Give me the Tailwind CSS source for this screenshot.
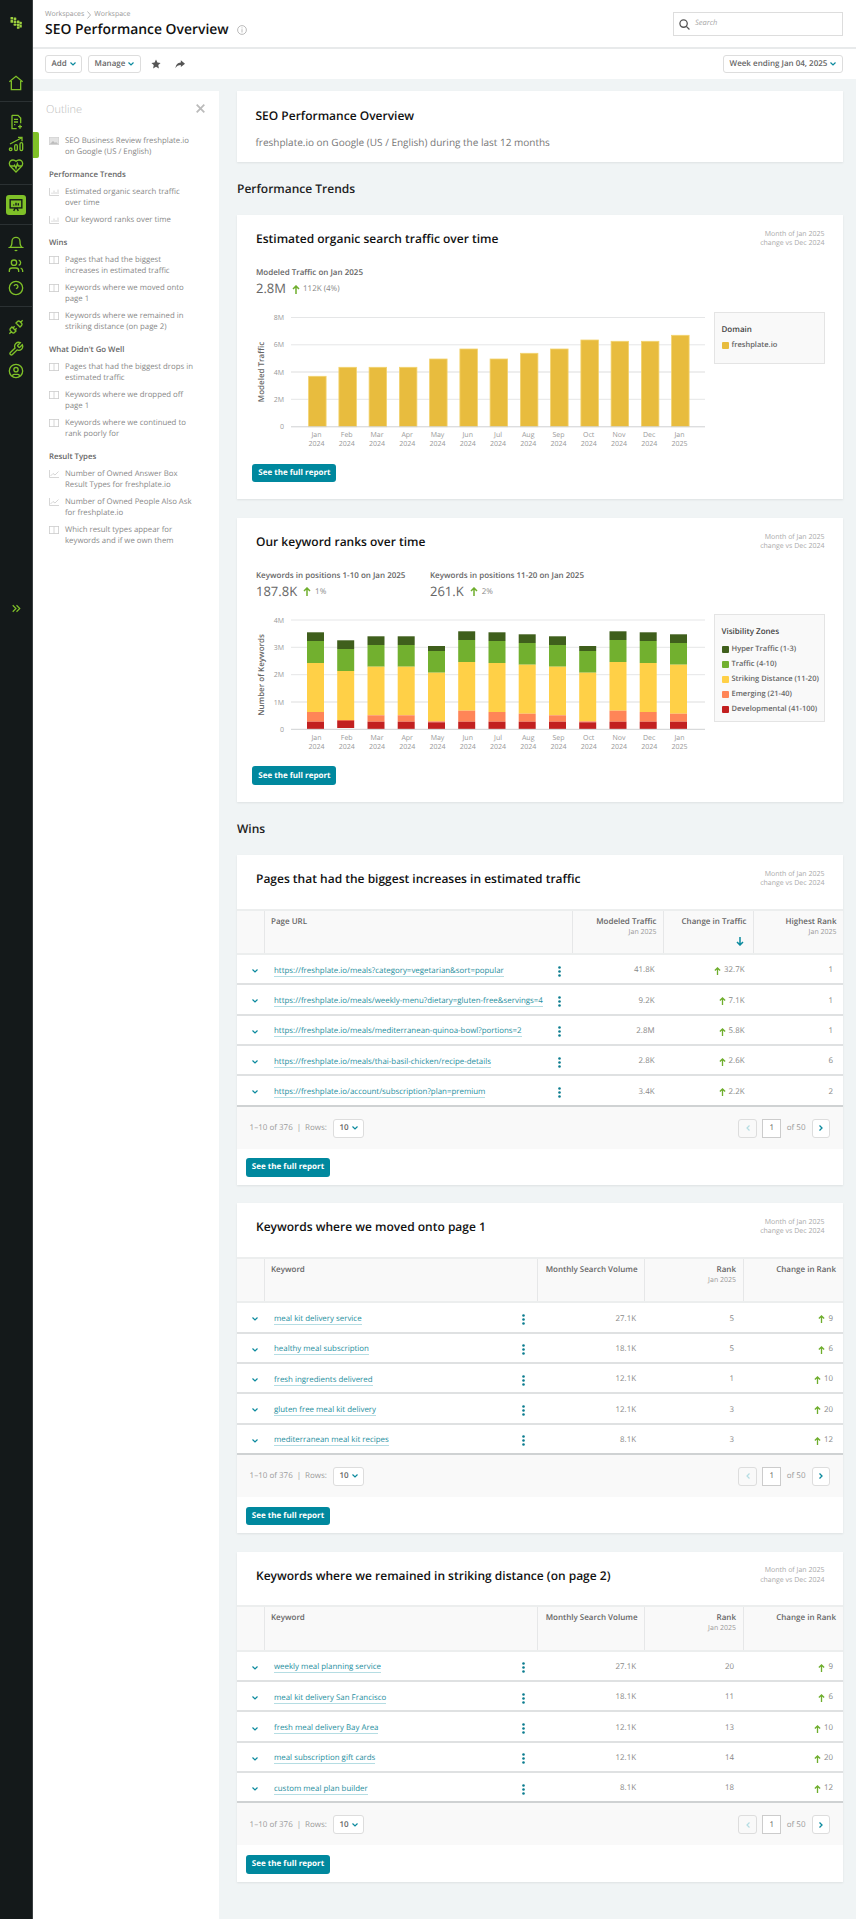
<!DOCTYPE html>
<html lang="en"><head><meta charset="utf-8"><title>SEO Performance Overview</title>
<script src="https://cdn.jsdelivr.net/npm/@tailwindcss/browser@4"></script></head>
<body class="font-['Open_Sans',sans-serif] [text-rendering:geometricPrecision] bg-[#f0f4f5] text-[#666]">
<div class="flex w-[856px] h-[1919px] overflow-hidden">
<!-- Sidebar -->
<aside class="w-[33px] shrink-0 bg-[#14191a] border-r border-[#3a3f40] flex flex-col text-[#7fc028]">
 <div class="h-[102px] border-b border-[#2b3133] flex flex-col items-center pt-[17px]">
  <svg class="w-[12px] h-[12px]" viewBox="0 0 12 12" fill="#9ccf3f"><rect x="0.500" y="0" width="2.600" height="2.600" rx="0.500"/><rect x="3.700" y="0.500" width="2.600" height="2.600" rx="0.500"/><rect x="0.500" y="3.100" width="2.600" height="2.600" rx="0.500"/><rect x="3.700" y="3.600" width="2.600" height="2.600" rx="0.500"/><rect x="6.900" y="3.600" width="2.600" height="2.600" rx="0.500"/><rect x="3.700" y="6.700" width="2.600" height="2" rx="0.500"/><rect x="6.900" y="6.700" width="2.600" height="2.600" rx="0.500"/><rect x="9.500" y="4.800" width="2.300" height="2.600" rx="0.500"/><rect x="6.900" y="9.400" width="2.600" height="2.400" rx="0.500"/><rect x="9.500" y="8" width="2.300" height="2.600" rx="0.500"/></svg>
  <svg class="w-[16px] h-[16px] mt-[46px]" viewBox="0 0 24 24" fill="none" stroke="currentColor" stroke-width="2"><path d="M2 10 12 2l10 8M5 9v13h14V9"/></svg>
 </div>
 <div class="h-[83px] border-b border-[#2b3133] flex flex-col items-center pt-[12px] gap-[6px]">
  <svg class="w-[16px] h-[16px]" viewBox="0 0 24 24" fill="none" stroke="currentColor" stroke-width="2"><path d="M6 2h9l4 4v8M6 2v20h7M9 8h6M9 12h6M9 16h2M18 16v6M15 19h6"/></svg>
  <svg class="w-[16px] h-[16px]" viewBox="0 0 24 24" fill="none" stroke="currentColor" stroke-width="2"><path d="M3 12 20 3M15 2h6v6"/><rect x="2" y="18" width="4" height="4" rx="2"/><rect x="10" y="13" width="4" height="9" rx="2"/><rect x="18" y="10" width="4" height="12" rx="2"/></svg>
  <svg class="w-[16px] h-[16px]" viewBox="0 0 24 24" fill="none" stroke="currentColor" stroke-width="2"><path d="M19 14c1.49-1.46 3-3.21 3-5.5A5.5 5.5 0 0 0 16.5 3c-1.76 0-3 .5-4.5 2-1.5-1.5-2.74-2-4.5-2A5.5 5.5 0 0 0 2 8.5c0 2.3 1.5 4.05 3 5.5l7 7Z"/><path d="M3.22 12H9.5l.5-1 2 4.5 2-7 1.5 3.5h5.27"/></svg>
 </div>
 <div class="h-[39.5px] border-b border-[#2b3133] flex justify-center pt-[9.5px]">
  <div class="w-[20.5px] h-[20.5px] rounded-[3px] bg-[#7fc028] flex items-center justify-center">
   <svg class="w-[14px] h-[14px]" viewBox="0 0 24 24" fill="none" stroke="#14191a" stroke-width="2.4"><rect x="2" y="3" width="20" height="14"/><path d="M8 22l3-5M16 22l-3-5M8 13v-2M12 13V8M16 13v-4"/></svg>
  </div>
 </div>
 <div class="h-[82.5px] border-b border-[#2b3133] flex flex-col items-center pt-[11.5px] gap-[6px]">
  <svg class="w-[16px] h-[16px]" viewBox="0 0 24 24" fill="none" stroke="currentColor" stroke-width="2"><path d="M6 8a6 6 0 0 1 12 0c0 7 3 9 3 9H3s3-2 3-9"/><path d="M10.3 21a1.94 1.94 0 0 0 3.4 0"/></svg>
  <svg class="w-[16px] h-[16px]" viewBox="0 0 24 24" fill="none" stroke="currentColor" stroke-width="2"><path d="M16 21v-2a4 4 0 0 0-4-4H6a4 4 0 0 0-4 4v2"/><circle cx="9" cy="7" r="4"/><path d="M22 21v-2a4 4 0 0 0-3-3.87M16 3.13a4 4 0 0 1 0 7.75"/></svg>
  <svg class="w-[16px] h-[16px]" viewBox="0 0 24 24" fill="none" stroke="currentColor" stroke-width="2"><circle cx="12" cy="12" r="10"/><path d="M9.09 9a3 3 0 0 1 5.83 1c0 2-3 3-3 3M12 17h.01"/></svg>
 </div>
 <div class="flex flex-col items-center pt-[12px] gap-[6px]">
  <svg class="w-[16px] h-[16px]" viewBox="0 0 24 24" fill="none" stroke="currentColor" stroke-width="2"><path d="m19 5 3-3M2 22l3-3M6.3 20.3a2.4 2.4 0 0 0 3.4 0L12 18l-6-6-2.3 2.3a2.4 2.4 0 0 0 0 3.4ZM7.5 13.5 10 11M10.5 16.5 13 14M12 6l6 6 2.3-2.3a2.4 2.4 0 0 0 0-3.4l-2.6-2.6a2.4 2.4 0 0 0-3.4 0Z"/></svg>
  <svg class="w-[16px] h-[16px]" viewBox="0 0 24 24" fill="none" stroke="currentColor" stroke-width="2"><path d="M14.7 6.3a1 1 0 0 0 0 1.4l1.6 1.6a1 1 0 0 0 1.4 0l3.77-3.77a6 6 0 0 1-7.94 7.94l-6.91 6.91a2.12 2.12 0 0 1-3-3l6.91-6.91a6 6 0 0 1 7.94-7.94l-3.76 3.76z"/></svg>
  <svg class="w-[16px] h-[16px]" viewBox="0 0 24 24" fill="none" stroke="currentColor" stroke-width="2"><circle cx="12" cy="12" r="10"/><circle cx="12" cy="10" r="3.2"/><path d="M7 20.662V19a2 2 0 0 1 2-2h6a2 2 0 0 1 2 2v1.662"/></svg>
  <svg class="w-[13px] h-[13px] mt-[217px]" viewBox="0 0 24 24" fill="none" stroke="currentColor" stroke-width="2.200"><path d="m5 18 6-6-6-6M12 18l6-6-6-6"/></svg>
 </div>
</aside>
<div class="flex-1 flex flex-col min-w-0">
 <!-- Header -->
 <header class="h-[49px] bg-white border-b-2 border-[#e8eaeb] flex items-start justify-between pl-[12px] pr-[13px] shrink-0">
  <div class="pt-[10px]">
   <div class="flex items-center gap-[3px] h-[10px] text-[7px] leading-[10px] text-[#999]">Workspaces <svg class="w-[4px] h-[8px]" viewBox="0 0 4 8" fill="none" stroke="#999" stroke-width="0.7"><path d="m.5.5 3 3.500-3 3.500"/></svg> Workspace</div>
   <div class="flex items-center mt-[1px]"><h1 class="text-[13.900px] leading-[18px] font-semibold text-[#111]">SEO Performance Overview</h1>
    <svg class="w-[10px] h-[10px] ml-[8px]" viewBox="0 0 10 10" fill="none" stroke="#aaa" stroke-width="0.8"><circle cx="5" cy="5" r="4.4"/><path d="M5 4.2V7.5M5 2.4v1"/></svg></div>
  </div>
  <div class="mt-[12px] w-[170px] h-[24px] border border-[#ddd] flex items-center pl-[5px] gap-[5px]">
   <svg class="w-[11px] h-[11px]" viewBox="0 0 12 12" fill="none" stroke="#555" stroke-width="1.4"><circle cx="5" cy="5" r="4"/><path d="m8 8 3.4 3.4"/></svg>
   <span class="italic text-[7.5px] text-[#aaa]">Search</span>
  </div>
 </header>
 <!-- Toolbar -->
 <div class="h-[30px] bg-white flex items-center pl-[12px] pr-[13px] shrink-0">
  <div class="h-[18.5px] w-[37px] border border-[#ddd] rounded-[3px] flex items-center justify-center gap-[3px] text-[8px] font-semibold text-[#666]">Add <svg class="w-[6px] h-[4px]" viewBox="0 0 6 4" fill="none" stroke="#0b8a9e" stroke-width="1.2"><path d="m.5.5 2.500 2.500 2.500-2.500"/></svg></div>
  <div class="h-[18.5px] w-[53px] ml-[6px] border border-[#ddd] rounded-[3px] flex items-center justify-center gap-[3px] text-[8px] font-semibold text-[#666]">Manage <svg class="w-[6px] h-[4px]" viewBox="0 0 6 4" fill="none" stroke="#0b8a9e" stroke-width="1.2"><path d="m.5.5 2.500 2.500 2.500-2.500"/></svg></div>
  <svg class="w-[10px] h-[10px] ml-[10px]" viewBox="0 0 24 24" fill="#555"><path d="m12 1 3.4 7.300 7.600 1-5.600 5.300 1.500 8L12 18.700 5.100 22.600l1.500-8L1 9.300l7.600-1z"/></svg>
  <svg class="w-[10px] h-[9px] ml-[14px]" viewBox="0 0 12 10" fill="#555"><path d="M7 0l5 4-5 4V5.500C4 5.500 2 6.500 0.500 9.500 1 5.500 3 2.700 7 2.500z"/></svg>
  <div class="ml-auto h-[18.5px] w-[120px] border border-[#ddd] rounded-[3px] flex items-center justify-center gap-[3px] text-[8px] font-semibold text-[#666]">Week ending Jan 04, 2025 <svg class="w-[6px] h-[4px]" viewBox="0 0 6 4" fill="none" stroke="#0b8a9e" stroke-width="1.2"><path d="m.5.5 2.500 2.500 2.500-2.500"/></svg></div>
 </div>
 <div class="flex flex-1 pt-[12px] min-h-0">
  <!-- Outline -->
  <nav class="relative w-[186px] shrink-0 bg-white pl-[16px] pr-[22px] text-[7.800px] leading-[11px] text-[#888]">
   <div class="absolute left-0 top-[41px] w-[5.500px] h-[26px] bg-[#7fc028] rounded-r-[2px]"></div>
   <div class="h-[44.500px] pt-[11px] -mr-[10px] flex items-start justify-between">
    <span class="-ml-[3px] text-[11px] leading-[16px] font-light text-[#bbb]">Outline</span>
    <svg class="w-[9px] h-[9px] mt-[2px] mr-[2px]" viewBox="0 0 9 9" fill="none" stroke="#bbb" stroke-width="1.800"><path d="m.7.7 7.600 7.600M8.300.7.700 8.300"/></svg>
   </div>
   <div class="flex flex-col gap-[6px]">
    <div class="flex gap-[6px]"><svg class="w-[10px] h-[8px] mt-[1px] shrink-0" viewBox="0 0 10 8" fill="#e3e3e3" stroke="#ccc" stroke-width="0.6"><rect x="0.300" y="0.300" width="9.400" height="7.400"/><path d="m1 7 3-3 2 2 1-1 2 2z" fill="#bbb"/></svg><span>SEO Business Review freshplate.io on Google (US / English)</span></div>
    <div class="font-semibold text-[#666] mt-[6px]">Performance Trends</div>
    <div class="flex gap-[6px]"><svg class="w-[10px] h-[8px] mt-[1px] shrink-0" viewBox="0 0 10 8" fill="none" stroke="#ccc" stroke-width="0.8"><path d="M.5 0v7.500H10M3 6V4.500M5 6V2.500M7 6V4M9 6V1.500"/></svg><span>Estimated organic search traffic over time</span></div>
    <div class="flex gap-[6px]"><svg class="w-[10px] h-[8px] mt-[1px] shrink-0" viewBox="0 0 10 8" fill="none" stroke="#ccc" stroke-width="0.8"><path d="M.5 0v7.500H10M3 6V4.500M5 6V2.500M7 6V4M9 6V1.500"/></svg><span>Our keyword ranks over time</span></div>
    <div class="font-semibold text-[#666] mt-[6px]">Wins</div>
    <div class="flex gap-[6px]"><svg class="w-[10px] h-[8px] mt-[1px] shrink-0" viewBox="0 0 10 8" fill="none" stroke="#ccc" stroke-width="0.8"><rect x="0.400" y="0.400" width="9.200" height="7.200"/><path d="M5 .4v7.200"/></svg><span>Pages that had the biggest increases in estimated traffic</span></div>
    <div class="flex gap-[6px]"><svg class="w-[10px] h-[8px] mt-[1px] shrink-0" viewBox="0 0 10 8" fill="none" stroke="#ccc" stroke-width="0.8"><rect x="0.400" y="0.400" width="9.200" height="7.200"/><path d="M5 .4v7.200"/></svg><span>Keywords where we moved onto page 1</span></div>
    <div class="flex gap-[6px]"><svg class="w-[10px] h-[8px] mt-[1px] shrink-0" viewBox="0 0 10 8" fill="none" stroke="#ccc" stroke-width="0.8"><rect x="0.400" y="0.400" width="9.200" height="7.200"/><path d="M5 .4v7.200"/></svg><span>Keywords where we remained in striking distance (on page 2)</span></div>
    <div class="font-semibold text-[#666] mt-[6px]">What Didn't Go Well</div>
    <div class="flex gap-[6px]"><svg class="w-[10px] h-[8px] mt-[1px] shrink-0" viewBox="0 0 10 8" fill="none" stroke="#ccc" stroke-width="0.8"><rect x="0.400" y="0.400" width="9.200" height="7.200"/><path d="M5 .4v7.200"/></svg><span>Pages that had the biggest drops in estimated traffic</span></div>
    <div class="flex gap-[6px]"><svg class="w-[10px] h-[8px] mt-[1px] shrink-0" viewBox="0 0 10 8" fill="none" stroke="#ccc" stroke-width="0.8"><rect x="0.400" y="0.400" width="9.200" height="7.200"/><path d="M5 .4v7.200"/></svg><span>Keywords where we dropped off page 1</span></div>
    <div class="flex gap-[6px]"><svg class="w-[10px] h-[8px] mt-[1px] shrink-0" viewBox="0 0 10 8" fill="none" stroke="#ccc" stroke-width="0.8"><rect x="0.400" y="0.400" width="9.200" height="7.200"/><path d="M5 .4v7.200"/></svg><span>Keywords where we continued to rank poorly for</span></div>
    <div class="font-semibold text-[#666] mt-[6px]">Result Types</div>
    <div class="flex gap-[6px]"><svg class="w-[10px] h-[8px] mt-[1px] shrink-0" viewBox="0 0 10 8" fill="none" stroke="#ccc" stroke-width="0.8"><path d="M.5 0v7.500H10M1.500 6l2.500-2.500 2 1.500 3.500-3.500"/></svg><span>Number of Owned Answer Box Result Types for freshplate.io</span></div>
    <div class="flex gap-[6px]"><svg class="w-[10px] h-[8px] mt-[1px] shrink-0" viewBox="0 0 10 8" fill="none" stroke="#ccc" stroke-width="0.8"><path d="M.5 0v7.500H10M1.500 6l2.500-2.500 2 1.500 3.500-3.500"/></svg><span>Number of Owned People Also Ask for freshplate.io</span></div>
    <div class="flex gap-[6px]"><svg class="w-[10px] h-[8px] mt-[1px] shrink-0" viewBox="0 0 10 8" fill="none" stroke="#ccc" stroke-width="0.8"><rect x="0.400" y="0.400" width="9.200" height="7.200"/><path d="M5 .4v7.200"/></svg><span>Which result types appear for keywords and if we own them</span></div>
   </div>
  </nav>
  <!-- Main -->
  <main class="w-[606px] ml-[18px] shrink-0">
   <section class="h-[71px] bg-white shadow-[0_1px_2px_rgba(0,0,0,0.08)] pl-[18.500px] pt-[16px]">
    <h2 class="text-[12px] leading-[18px] font-semibold text-[#111]">SEO Performance Overview</h2>
    <p class="mt-[10px] text-[10px] leading-[14px] font-medium text-[#777]">freshplate.io on Google (US / English) during the last 12 months</p>
   </section>
   <h2 class="h-[53px] pt-[1px] flex items-center text-[12px] font-semibold text-[#222]">Performance Trends</h2>

   <section class="h-[284px] bg-white shadow-[0_1px_2px_rgba(0,0,0,0.08)]">
    <div class="h-[48px] flex justify-between pl-[19px] pr-[18.600px] pt-[15px]">
     <h3 class="text-[12px] leading-[18px] font-semibold text-[#111]">Estimated organic search traffic over time</h3>
     <div class="text-right text-[7px] leading-[9.300px] text-[#aaa] -mt-[0.500px]">Month of Jan 2025<br>change vs Dec 2024</div>
    </div>
    <div class="h-[42px] pl-[19px]">
     <div class="text-[8px] leading-[11px] pt-[4px] h-[15px] font-semibold text-[#666]">Modeled Traffic on Jan 2025</div>
     <div class="flex items-center h-[18px] mt-[2px]"><span class="text-[13px] text-[#666]">2.8M</span>
      <svg class="w-[8px] h-[9px] ml-[6px]" viewBox="0 0 8 9" fill="none" stroke="#6fae2d" stroke-width="1.500"><path d="M4 9V1M1 4l3-3 3 3"/></svg><span class="ml-[3px] text-[8px] text-[#888]">112K (4%)</span></div>
    </div>
    <div class="h-[150px] flex">
     <svg class="w-[477px] h-[150px] shrink-0" viewBox="237 305 477 150" font-size="7" fill="#999">
      <g stroke="#e5e6e7" stroke-width="1"><path d="M291 317.500H705M291 344.800H705M291 399.300H705"/><path d="M291 372H705" stroke="#eeeeee" stroke-width="2"/></g>
      <g fill="#e8bc3e" stroke="#f3d36f" stroke-width="0.800">
       <rect x="308.600" y="376.300" width="17.500" height="50.400"/><rect x="338.900" y="367.300" width="17.500" height="59.400"/><rect x="369.100" y="367.300" width="17.500" height="59.400"/><rect x="399.400" y="367.300" width="17.500" height="59.400"/><rect x="429.600" y="359" width="17.500" height="67.700"/><rect x="459.900" y="349" width="17.500" height="77.700"/><rect x="490.100" y="359" width="17.500" height="67.700"/><rect x="520.400" y="353.300" width="17.500" height="73.400"/><rect x="550.600" y="349" width="17.500" height="77.700"/><rect x="580.900" y="340" width="17.500" height="86.700"/><rect x="611.100" y="341.300" width="17.500" height="85.400"/><rect x="641.400" y="341.300" width="17.500" height="85.400"/><rect x="671.600" y="335.300" width="17.500" height="91.400"/>
      </g>
      <path d="M291 426.800H705" stroke="#cfd1d2" stroke-width="1"/>
      <g text-anchor="end"><text x="284" y="320">8M</text><text x="284" y="347.300">6M</text><text x="284" y="374.600">4M</text><text x="284" y="402">2M</text><text x="284" y="429.300">0</text></g>
      <text transform="translate(264 372) rotate(-90)" text-anchor="middle" font-size="8" font-weight="600" fill="#666">Modeled Traffic</text>
      <g text-anchor="middle">
       <text x="316.500" y="437.200">Jan</text><text x="316.500" y="446.200">2024</text><text x="346.700" y="437.200">Feb</text><text x="346.700" y="446.200">2024</text><text x="377" y="437.200">Mar</text><text x="377" y="446.200">2024</text><text x="407.200" y="437.200">Apr</text><text x="407.200" y="446.200">2024</text><text x="437.500" y="437.200">May</text><text x="437.500" y="446.200">2024</text><text x="467.700" y="437.200">Jun</text><text x="467.700" y="446.200">2024</text><text x="498" y="437.200">Jul</text><text x="498" y="446.200">2024</text><text x="528.200" y="437.200">Aug</text><text x="528.200" y="446.200">2024</text><text x="558.500" y="437.200">Sep</text><text x="558.500" y="446.200">2024</text><text x="588.700" y="437.200">Oct</text><text x="588.700" y="446.200">2024</text><text x="619" y="437.200">Nov</text><text x="619" y="446.200">2024</text><text x="649.200" y="437.200">Dec</text><text x="649.200" y="446.200">2024</text><text x="679.500" y="437.200">Jan</text><text x="679.500" y="446.200">2025</text>
      </g>
     </svg>
     <div class="mt-[6.700px] w-[111px] h-[52px] bg-[#f9f9f9] border border-[#e4e4e4] pl-[6.500px] pt-[11px]">
      <div class="text-[8px] leading-[11px] font-semibold text-[#444]">Domain</div>
      <div class="flex items-center gap-[3px] mt-[5px] text-[7.500px] leading-[11px] font-semibold text-[#666]"><span class="w-[7px] h-[7px] rounded-[1px] bg-[#e8bc3e]"></span>freshplate.io</div>
     </div>
    </div>
    <a class="ml-[15.400px] mt-[8.700px] w-[84px] h-[18.500px] rounded-[3px] bg-[#00889e] flex items-center justify-center text-[8px] font-bold text-white">See the full report</a>
   </section>

   <section class="h-[284px] mt-[19px] bg-white shadow-[0_1px_2px_rgba(0,0,0,0.08)]">
    <div class="h-[48px] flex justify-between pl-[19px] pr-[18.600px] pt-[15px]">
     <h3 class="text-[12px] leading-[18px] font-semibold text-[#111]">Our keyword ranks over time</h3>
     <div class="text-right text-[7px] leading-[9.300px] text-[#aaa] -mt-[0.500px]">Month of Jan 2025<br>change vs Dec 2024</div>
    </div>
    <div class="h-[42px] pl-[19px] flex">
     <div class="w-[174px]">
      <div class="text-[8px] leading-[11px] pt-[3.500px] h-[14.500px] font-semibold text-[#666]">Keywords in positions 1-10 on Jan 2025</div>
      <div class="flex items-center h-[18px] mt-[2px]"><span class="text-[13px] text-[#666]">187.8K</span><svg class="w-[8px] h-[9px] ml-[6px]" viewBox="0 0 8 9" fill="none" stroke="#6fae2d" stroke-width="1.500"><path d="M4 9V1M1 4l3-3 3 3"/></svg><span class="ml-[4px] text-[8px] text-[#888]">1%</span></div>
     </div>
     <div>
      <div class="text-[8px] leading-[11px] pt-[3.500px] h-[14.500px] font-semibold text-[#666]">Keywords in positions 11-20 on Jan 2025</div>
      <div class="flex items-center h-[18px] mt-[2px]"><span class="text-[13px] text-[#666]">261.K</span><svg class="w-[8px] h-[9px] ml-[6px]" viewBox="0 0 8 9" fill="none" stroke="#6fae2d" stroke-width="1.500"><path d="M4 9V1M1 4l3-3 3 3"/></svg><span class="ml-[4px] text-[8px] text-[#888]">2%</span></div>
     </div>
    </div>
    <div class="h-[150px] flex">
     <svg class="w-[477px] h-[150px] shrink-0" viewBox="237 608 477 150" font-size="7" fill="#999">
      <g stroke="#e5e6e7" stroke-width="1"><path d="M291 620H705M291 647.300H705M291 674.700H705"/><path d="M291 702H705" stroke="#eeeeee" stroke-width="2"/></g>
      <g fill="#3f5f1c"><rect x="307" y="632.300" width="17" height="8.700"/><rect x="337.200" y="640.300" width="17" height="8.700"/><rect x="367.500" y="636.300" width="17" height="8.700"/><rect x="397.700" y="636.300" width="17" height="8.700"/><rect x="428" y="646" width="17" height="5"/><rect x="458.200" y="631.300" width="17" height="8.700"/><rect x="488.500" y="632.300" width="17" height="8.700"/><rect x="518.700" y="634.300" width="17" height="8.700"/><rect x="549" y="636.300" width="17" height="8.700"/><rect x="579.200" y="646" width="17" height="5"/><rect x="609.500" y="631.300" width="17" height="8.700"/><rect x="639.700" y="632.300" width="17" height="8.700"/><rect x="670" y="634.300" width="17" height="8.700"/></g>
      <g fill="#72b02f"><rect x="307" y="641" width="17" height="22"/><rect x="337.200" y="649" width="17" height="22"/><rect x="367.500" y="645" width="17" height="21.700"/><rect x="397.700" y="645" width="17" height="21.700"/><rect x="428" y="651" width="17" height="21.700"/><rect x="458.200" y="640" width="17" height="22"/><rect x="488.500" y="641" width="17" height="22"/><rect x="518.700" y="643" width="17" height="21.700"/><rect x="549" y="645" width="17" height="21.700"/><rect x="579.200" y="651" width="17" height="21.700"/><rect x="609.500" y="640" width="17" height="22"/><rect x="639.700" y="641" width="17" height="22"/><rect x="670" y="643" width="17" height="21.700"/></g>
      <g fill="#ffd047"><rect x="307" y="663" width="17" height="49"/><rect x="337.200" y="671" width="17" height="49"/><rect x="367.500" y="666.700" width="17" height="48.600"/><rect x="397.700" y="666.700" width="17" height="48.600"/><rect x="428" y="672.700" width="17" height="48.600"/><rect x="458.200" y="662" width="17" height="48.700"/><rect x="488.500" y="663" width="17" height="49"/><rect x="518.700" y="664.700" width="17" height="49"/><rect x="549" y="666.700" width="17" height="48.600"/><rect x="579.200" y="672.700" width="17" height="48.600"/><rect x="609.500" y="662" width="17" height="48.700"/><rect x="639.700" y="663" width="17" height="49"/><rect x="670" y="664.700" width="17" height="49"/></g>
      <g fill="#ff8557"><rect x="307" y="712" width="17" height="9.700"/><rect x="337.200" y="720" width="17" height="1"/><rect x="367.500" y="715.300" width="17" height="6.400"/><rect x="397.700" y="715.300" width="17" height="6.400"/><rect x="428" y="721.300" width="17" height="1"/><rect x="458.200" y="710.700" width="17" height="11"/><rect x="488.500" y="712" width="17" height="9.700"/><rect x="518.700" y="713.700" width="17" height="8"/><rect x="549" y="715.300" width="17" height="6.400"/><rect x="579.200" y="721.300" width="17" height="1"/><rect x="609.500" y="710.700" width="17" height="11"/><rect x="639.700" y="712" width="17" height="9.700"/><rect x="670" y="713.700" width="17" height="8"/></g>
      <g fill="#c22020"><rect x="307" y="721.700" width="17" height="7.300"/><rect x="337.200" y="720.700" width="17" height="7.300"/><rect x="367.500" y="721.700" width="17" height="7.300"/><rect x="397.700" y="721.700" width="17" height="7.300"/><rect x="428" y="722.300" width="17" height="6.700"/><rect x="458.200" y="721.700" width="17" height="7.300"/><rect x="488.500" y="721.700" width="17" height="7.300"/><rect x="518.700" y="721.700" width="17" height="7.300"/><rect x="549" y="721.700" width="17" height="7.300"/><rect x="579.200" y="722.300" width="17" height="6.700"/><rect x="609.500" y="721.700" width="17" height="7.300"/><rect x="639.700" y="721.700" width="17" height="7.300"/><rect x="670" y="721.700" width="17" height="7.300"/></g>
      <path d="M291 729.300H705" stroke="#cfd1d2" stroke-width="1"/>
      <g text-anchor="end"><text x="284" y="622.600">4M</text><text x="284" y="650">3M</text><text x="284" y="677.300">2M</text><text x="284" y="704.600">1M</text><text x="284" y="731.900">0</text></g>
      <text transform="translate(264 675) rotate(-90)" text-anchor="middle" font-size="8" font-weight="600" fill="#666">Number of Keywords</text>
      <g text-anchor="middle">
       <text x="316.500" y="739.800">Jan</text><text x="316.500" y="748.800">2024</text><text x="346.700" y="739.800">Feb</text><text x="346.700" y="748.800">2024</text><text x="377" y="739.800">Mar</text><text x="377" y="748.800">2024</text><text x="407.200" y="739.800">Apr</text><text x="407.200" y="748.800">2024</text><text x="437.500" y="739.800">May</text><text x="437.500" y="748.800">2024</text><text x="467.700" y="739.800">Jun</text><text x="467.700" y="748.800">2024</text><text x="498" y="739.800">Jul</text><text x="498" y="748.800">2024</text><text x="528.200" y="739.800">Aug</text><text x="528.200" y="748.800">2024</text><text x="558.500" y="739.800">Sep</text><text x="558.500" y="748.800">2024</text><text x="588.700" y="739.800">Oct</text><text x="588.700" y="748.800">2024</text><text x="619" y="739.800">Nov</text><text x="619" y="748.800">2024</text><text x="649.200" y="739.800">Dec</text><text x="649.200" y="748.800">2024</text><text x="679.500" y="739.800">Jan</text><text x="679.500" y="748.800">2025</text>
      </g>
     </svg>
     <div class="mt-[6.300px] w-[111px] h-[107.700px] bg-[#f9f9f9] border border-[#e4e4e4] pl-[6.500px] pt-[11px]">
      <div class="text-[8px] leading-[11px] font-semibold text-[#444] mb-[4.500px]">Visibility Zones</div>
      <div class="flex items-center gap-[3px] h-[15.150px] text-[7.500px] font-semibold text-[#666]"><span class="w-[7px] h-[7px] rounded-[1px] bg-[#3f5f1c]"></span>Hyper Traffic (1-3)</div>
      <div class="flex items-center gap-[3px] h-[15.150px] text-[7.500px] font-semibold text-[#666]"><span class="w-[7px] h-[7px] rounded-[1px] bg-[#72b02f]"></span>Traffic (4-10)</div>
      <div class="flex items-center gap-[3px] h-[15.150px] text-[7.500px] font-semibold text-[#666]"><span class="w-[7px] h-[7px] rounded-[1px] bg-[#ffd047]"></span>Striking Distance (11-20)</div>
      <div class="flex items-center gap-[3px] h-[15.150px] text-[7.500px] font-semibold text-[#666]"><span class="w-[7px] h-[7px] rounded-[1px] bg-[#ff8557]"></span>Emerging (21-40)</div>
      <div class="flex items-center gap-[3px] h-[15.150px] text-[7.500px] font-semibold text-[#666]"><span class="w-[7px] h-[7px] rounded-[1px] bg-[#c22020]"></span>Developmental (41-100)</div>
     </div>
    </div>
    <a class="ml-[15.400px] mt-[8.300px] w-[84px] h-[18.500px] rounded-[3px] bg-[#00889e] flex items-center justify-center text-[8px] font-bold text-white">See the full report</a>
   </section>

   <h2 class="h-[53px] pt-[1px] flex items-center text-[12px] font-semibold text-[#222]">Wins</h2>

   <!-- Table card 1 -->
   <section class="h-[330px] bg-white shadow-[0_1px_2px_rgba(0,0,0,0.08)]">
    <div class="h-[53.700px] flex justify-between pl-[19px] pr-[18.600px] pt-[15px]">
     <h3 class="text-[12px] leading-[18px] font-semibold text-[#111]">Pages that had the biggest increases in estimated traffic</h3>
     <div class="text-right text-[7px] leading-[9.300px] text-[#aaa] -mt-[0.500px]">Month of Jan 2025<br>change vs Dec 2024</div>
    </div>
    <div class="grid grid-cols-[28px_308px_91px_90px_89px] h-[46.300px] bg-[#f9f9f9] border-t-2 border-b-2 border-[#eceeee] text-[8px] leading-[11px] font-semibold text-[#666]">
     <div class="border-r border-[#e6e7e8]"></div>
     <div class="border-r border-[#e6e7e8] pl-[6px] pt-[5px]">Page URL</div>
     <div class="border-r border-[#e6e7e8] pr-[6.500px] pt-[5px] text-right">Modeled Traffic<div class="text-[7px] font-normal text-[#999] leading-[9px] mt-[1px]">Jan 2025</div></div>
     <div class="border-r border-[#e6e7e8] pr-[6.500px] pt-[5px] text-right flex flex-col items-end">Change in Traffic<svg class="w-[8px] h-[9px] mt-[10px] mr-[3px]" viewBox="0 0 8 9" fill="none" stroke="#0b8a9e" stroke-width="1.500"><path d="M4 0v8M1 5l3 3 3-3"/></svg></div>
     <div class="pr-[6.500px] pt-[5px] text-right">Highest Rank<div class="text-[7px] font-normal text-[#999] leading-[9px] mt-[1px]">Jan 2025</div></div>
    </div>
    <div class="grid grid-cols-[28px_308px_91px_90px_89px] items-center h-[30.340px] pt-[4px] border-b-2 border-[#dfe1e2] text-[7.900px] text-[#888]">
     <svg class="w-[6px] h-[4px] ml-[15px]" viewBox="0 0 6 4" fill="none" stroke="#0b8a9e" stroke-width="1.200"><path d="m.5.5 2.500 2.500 2.500-2.500"/></svg>
     <div class="flex items-center justify-between pl-[9px] pr-[12.500px]"><a class="text-[#1f8fa0] border-b border-[#b5dde3] leading-[10px]">https://freshplate.io/meals?category=vegetarian&amp;sort=popular</a><svg class="w-[3px] h-[11px]" viewBox="0 0 3 11" fill="#0b7c8f"><circle cx="1.500" cy="1.500" r="1.300"/><circle cx="1.500" cy="5.500" r="1.300"/><circle cx="1.500" cy="9.500" r="1.300"/></svg></div>
     <div class="text-right pr-[9.500px]">41.8K</div>
     <div class="flex items-center justify-end gap-[3px] pr-[9.500px]"><svg class="w-[7px] h-[8px]" viewBox="0 0 8 9" fill="none" stroke="#6fae2d" stroke-width="1.500"><path d="M4 9V1M1 4l3-3 3 3"/></svg>32.7K</div>
     <div class="text-right pr-[10px]">1</div>
    </div>
    <div class="grid grid-cols-[28px_308px_91px_90px_89px] items-center h-[30.340px] pt-[4px] border-b-2 border-[#dfe1e2] text-[7.900px] text-[#888]">
     <svg class="w-[6px] h-[4px] ml-[15px]" viewBox="0 0 6 4" fill="none" stroke="#0b8a9e" stroke-width="1.200"><path d="m.5.5 2.500 2.500 2.500-2.500"/></svg>
     <div class="flex items-center justify-between pl-[9px] pr-[12.500px]"><a class="text-[#1f8fa0] border-b border-[#b5dde3] leading-[10px]">https://freshplate.io/meals/weekly-menu?dietary=gluten-free&amp;servings=4</a><svg class="w-[3px] h-[11px]" viewBox="0 0 3 11" fill="#0b7c8f"><circle cx="1.500" cy="1.500" r="1.300"/><circle cx="1.500" cy="5.500" r="1.300"/><circle cx="1.500" cy="9.500" r="1.300"/></svg></div>
     <div class="text-right pr-[9.500px]">9.2K</div>
     <div class="flex items-center justify-end gap-[3px] pr-[9.500px]"><svg class="w-[7px] h-[8px]" viewBox="0 0 8 9" fill="none" stroke="#6fae2d" stroke-width="1.500"><path d="M4 9V1M1 4l3-3 3 3"/></svg>7.1K</div>
     <div class="text-right pr-[10px]">1</div>
    </div>
    <div class="grid grid-cols-[28px_308px_91px_90px_89px] items-center h-[30.340px] pt-[4px] border-b-2 border-[#dfe1e2] text-[7.900px] text-[#888]">
     <svg class="w-[6px] h-[4px] ml-[15px]" viewBox="0 0 6 4" fill="none" stroke="#0b8a9e" stroke-width="1.200"><path d="m.5.5 2.500 2.500 2.500-2.500"/></svg>
     <div class="flex items-center justify-between pl-[9px] pr-[12.500px]"><a class="text-[#1f8fa0] border-b border-[#b5dde3] leading-[10px]">https://freshplate.io/meals/mediterranean-quinoa-bowl?portions=2</a><svg class="w-[3px] h-[11px]" viewBox="0 0 3 11" fill="#0b7c8f"><circle cx="1.500" cy="1.500" r="1.300"/><circle cx="1.500" cy="5.500" r="1.300"/><circle cx="1.500" cy="9.500" r="1.300"/></svg></div>
     <div class="text-right pr-[9.500px]">2.8M</div>
     <div class="flex items-center justify-end gap-[3px] pr-[9.500px]"><svg class="w-[7px] h-[8px]" viewBox="0 0 8 9" fill="none" stroke="#6fae2d" stroke-width="1.500"><path d="M4 9V1M1 4l3-3 3 3"/></svg>5.8K</div>
     <div class="text-right pr-[10px]">1</div>
    </div>
    <div class="grid grid-cols-[28px_308px_91px_90px_89px] items-center h-[30.340px] pt-[4px] border-b-2 border-[#dfe1e2] text-[7.900px] text-[#888]">
     <svg class="w-[6px] h-[4px] ml-[15px]" viewBox="0 0 6 4" fill="none" stroke="#0b8a9e" stroke-width="1.200"><path d="m.5.5 2.500 2.500 2.500-2.500"/></svg>
     <div class="flex items-center justify-between pl-[9px] pr-[12.500px]"><a class="text-[#1f8fa0] border-b border-[#b5dde3] leading-[10px]">https://freshplate.io/meals/thai-basil-chicken/recipe-details</a><svg class="w-[3px] h-[11px]" viewBox="0 0 3 11" fill="#0b7c8f"><circle cx="1.500" cy="1.500" r="1.300"/><circle cx="1.500" cy="5.500" r="1.300"/><circle cx="1.500" cy="9.500" r="1.300"/></svg></div>
     <div class="text-right pr-[9.500px]">2.8K</div>
     <div class="flex items-center justify-end gap-[3px] pr-[9.500px]"><svg class="w-[7px] h-[8px]" viewBox="0 0 8 9" fill="none" stroke="#6fae2d" stroke-width="1.500"><path d="M4 9V1M1 4l3-3 3 3"/></svg>2.6K</div>
     <div class="text-right pr-[10px]">6</div>
    </div>
    <div class="grid grid-cols-[28px_308px_91px_90px_89px] items-center h-[30.340px] pt-[4px] border-b-2 border-[#cfd2d3] text-[7.900px] text-[#888]">
     <svg class="w-[6px] h-[4px] ml-[15px]" viewBox="0 0 6 4" fill="none" stroke="#0b8a9e" stroke-width="1.200"><path d="m.5.5 2.500 2.500 2.500-2.500"/></svg>
     <div class="flex items-center justify-between pl-[9px] pr-[12.500px]"><a class="text-[#1f8fa0] border-b border-[#b5dde3] leading-[10px]">https://freshplate.io/account/subscription?plan=premium</a><svg class="w-[3px] h-[11px]" viewBox="0 0 3 11" fill="#0b7c8f"><circle cx="1.500" cy="1.500" r="1.300"/><circle cx="1.500" cy="5.500" r="1.300"/><circle cx="1.500" cy="9.500" r="1.300"/></svg></div>
     <div class="text-right pr-[9.500px]">3.4K</div>
     <div class="flex items-center justify-end gap-[3px] pr-[9.500px]"><svg class="w-[7px] h-[8px]" viewBox="0 0 8 9" fill="none" stroke="#6fae2d" stroke-width="1.500"><path d="M4 9V1M1 4l3-3 3 3"/></svg>2.2K</div>
     <div class="text-right pr-[10px]">2</div>
    </div>
    <div class="h-[42px] pt-[1px] bg-[#f9f9f9] flex items-center pl-[12.600px] pr-[13px] text-[8px] text-[#999]">
     <span>1–10 of 376</span><span class="mx-[4px]">|</span><span>Rows:</span>
     <div class="ml-[6px] w-[31px] h-[19px] bg-white border border-[#ddd] rounded-[3px] flex items-center justify-center gap-[3px] font-semibold text-[#666]">10 <svg class="w-[6px] h-[4px]" viewBox="0 0 6 4" fill="none" stroke="#0b8a9e" stroke-width="1.200"><path d="m.5.5 2.500 2.500 2.500-2.500"/></svg></div>
     <div class="ml-auto w-[18.500px] h-[19px] border border-[#ddd] rounded-[3px] flex items-center justify-center"><svg class="w-[4px] h-[6px]" viewBox="0 0 4 6" fill="none" stroke="#b5dde3" stroke-width="1.200"><path d="M3.500.5 1 3l2.500 2.500"/></svg></div>
     <div class="ml-[5.500px] w-[19px] h-[19px] bg-white border border-[#ccc] flex items-center justify-center text-[#666]">1</div>
     <span class="ml-[5.500px]">of 50</span>
     <div class="ml-[6px] w-[18.500px] h-[19px] bg-white border border-[#ddd] rounded-[3px] flex items-center justify-center"><svg class="w-[4px] h-[6px]" viewBox="0 0 4 6" fill="none" stroke="#0b8a9e" stroke-width="1.300"><path d="M.5.5 3 3 .5 5.500"/></svg></div>
    </div>
    <a class="ml-[9px] mt-[9.600px] w-[84px] h-[18.500px] rounded-[3px] bg-[#00889e] flex items-center justify-center text-[8px] font-bold text-white">See the full report</a>
   </section>

   <!-- Table card 2 -->
   <section class="h-[330px] mt-[18.300px] bg-white shadow-[0_1px_2px_rgba(0,0,0,0.08)]">
    <div class="h-[53.700px] flex justify-between pl-[19px] pr-[18.600px] pt-[15px]">
     <h3 class="text-[12px] leading-[18px] font-semibold text-[#111]">Keywords where we moved onto page 1</h3>
     <div class="text-right text-[7px] leading-[9.300px] text-[#aaa] -mt-[0.500px]">Month of Jan 2025<br>change vs Dec 2024</div>
    </div>
    <div class="grid grid-cols-[28px_272.500px_107.500px_98.500px_99.500px] h-[46.300px] bg-[#f9f9f9] border-t-2 border-b-2 border-[#eceeee] text-[8px] leading-[11px] font-semibold text-[#666]">
     <div class="border-r border-[#e6e7e8]"></div>
     <div class="border-r border-[#e6e7e8] pl-[6px] pt-[5px]">Keyword</div>
     <div class="border-r border-[#e6e7e8] pr-[6.500px] pt-[5px] text-right">Monthly Search Volume</div>
     <div class="border-r border-[#e6e7e8] pr-[6.500px] pt-[5px] text-right">Rank<div class="text-[7px] font-normal text-[#999] leading-[9px] mt-[1px]">Jan 2025</div></div>
     <div class="pr-[7px] pt-[5px] text-right">Change in Rank</div>
    </div>
    <div class="grid grid-cols-[28px_272.500px_107.500px_98.500px_99.500px] items-center h-[30.340px] pt-[4px] border-b-2 border-[#dfe1e2] text-[7.900px] text-[#888]">
     <svg class="w-[6px] h-[4px] ml-[15px]" viewBox="0 0 6 4" fill="none" stroke="#0b8a9e" stroke-width="1.200"><path d="m.5.5 2.500 2.500 2.500-2.500"/></svg>
     <div class="flex items-center justify-between pl-[9px] pr-[12.500px]"><a class="text-[#1f8fa0] border-b border-[#b5dde3] leading-[10px]">meal kit delivery service</a><svg class="w-[3px] h-[11px]" viewBox="0 0 3 11" fill="#0b7c8f"><circle cx="1.500" cy="1.500" r="1.300"/><circle cx="1.500" cy="5.500" r="1.300"/><circle cx="1.500" cy="9.500" r="1.300"/></svg></div>
     <div class="text-right pr-[9px]">27.1K</div>
     <div class="text-right pr-[9.500px]">5</div>
     <div class="flex items-center justify-end gap-[3px] pr-[10px]"><svg class="w-[7px] h-[8px]" viewBox="0 0 8 9" fill="none" stroke="#6fae2d" stroke-width="1.500"><path d="M4 9V1M1 4l3-3 3 3"/></svg>9</div>
    </div>
    <div class="grid grid-cols-[28px_272.500px_107.500px_98.500px_99.500px] items-center h-[30.340px] pt-[4px] border-b-2 border-[#dfe1e2] text-[7.900px] text-[#888]">
     <svg class="w-[6px] h-[4px] ml-[15px]" viewBox="0 0 6 4" fill="none" stroke="#0b8a9e" stroke-width="1.200"><path d="m.5.5 2.500 2.500 2.500-2.500"/></svg>
     <div class="flex items-center justify-between pl-[9px] pr-[12.500px]"><a class="text-[#1f8fa0] border-b border-[#b5dde3] leading-[10px]">healthy meal subscription</a><svg class="w-[3px] h-[11px]" viewBox="0 0 3 11" fill="#0b7c8f"><circle cx="1.500" cy="1.500" r="1.300"/><circle cx="1.500" cy="5.500" r="1.300"/><circle cx="1.500" cy="9.500" r="1.300"/></svg></div>
     <div class="text-right pr-[9px]">18.1K</div>
     <div class="text-right pr-[9.500px]">5</div>
     <div class="flex items-center justify-end gap-[3px] pr-[10px]"><svg class="w-[7px] h-[8px]" viewBox="0 0 8 9" fill="none" stroke="#6fae2d" stroke-width="1.500"><path d="M4 9V1M1 4l3-3 3 3"/></svg>6</div>
    </div>
    <div class="grid grid-cols-[28px_272.500px_107.500px_98.500px_99.500px] items-center h-[30.340px] pt-[4px] border-b-2 border-[#dfe1e2] text-[7.900px] text-[#888]">
     <svg class="w-[6px] h-[4px] ml-[15px]" viewBox="0 0 6 4" fill="none" stroke="#0b8a9e" stroke-width="1.200"><path d="m.5.5 2.500 2.500 2.500-2.500"/></svg>
     <div class="flex items-center justify-between pl-[9px] pr-[12.500px]"><a class="text-[#1f8fa0] border-b border-[#b5dde3] leading-[10px]">fresh ingredients delivered</a><svg class="w-[3px] h-[11px]" viewBox="0 0 3 11" fill="#0b7c8f"><circle cx="1.500" cy="1.500" r="1.300"/><circle cx="1.500" cy="5.500" r="1.300"/><circle cx="1.500" cy="9.500" r="1.300"/></svg></div>
     <div class="text-right pr-[9px]">12.1K</div>
     <div class="text-right pr-[9.500px]">1</div>
     <div class="flex items-center justify-end gap-[3px] pr-[10px]"><svg class="w-[7px] h-[8px]" viewBox="0 0 8 9" fill="none" stroke="#6fae2d" stroke-width="1.500"><path d="M4 9V1M1 4l3-3 3 3"/></svg>10</div>
    </div>
    <div class="grid grid-cols-[28px_272.500px_107.500px_98.500px_99.500px] items-center h-[30.340px] pt-[4px] border-b-2 border-[#dfe1e2] text-[7.900px] text-[#888]">
     <svg class="w-[6px] h-[4px] ml-[15px]" viewBox="0 0 6 4" fill="none" stroke="#0b8a9e" stroke-width="1.200"><path d="m.5.5 2.500 2.500 2.500-2.500"/></svg>
     <div class="flex items-center justify-between pl-[9px] pr-[12.500px]"><a class="text-[#1f8fa0] border-b border-[#b5dde3] leading-[10px]">gluten free meal kit delivery</a><svg class="w-[3px] h-[11px]" viewBox="0 0 3 11" fill="#0b7c8f"><circle cx="1.500" cy="1.500" r="1.300"/><circle cx="1.500" cy="5.500" r="1.300"/><circle cx="1.500" cy="9.500" r="1.300"/></svg></div>
     <div class="text-right pr-[9px]">12.1K</div>
     <div class="text-right pr-[9.500px]">3</div>
     <div class="flex items-center justify-end gap-[3px] pr-[10px]"><svg class="w-[7px] h-[8px]" viewBox="0 0 8 9" fill="none" stroke="#6fae2d" stroke-width="1.500"><path d="M4 9V1M1 4l3-3 3 3"/></svg>20</div>
    </div>
    <div class="grid grid-cols-[28px_272.500px_107.500px_98.500px_99.500px] items-center h-[30.340px] pt-[4px] border-b-2 border-[#cfd2d3] text-[7.900px] text-[#888]">
     <svg class="w-[6px] h-[4px] ml-[15px]" viewBox="0 0 6 4" fill="none" stroke="#0b8a9e" stroke-width="1.200"><path d="m.5.5 2.500 2.500 2.500-2.500"/></svg>
     <div class="flex items-center justify-between pl-[9px] pr-[12.500px]"><a class="text-[#1f8fa0] border-b border-[#b5dde3] leading-[10px]">mediterranean meal kit recipes</a><svg class="w-[3px] h-[11px]" viewBox="0 0 3 11" fill="#0b7c8f"><circle cx="1.500" cy="1.500" r="1.300"/><circle cx="1.500" cy="5.500" r="1.300"/><circle cx="1.500" cy="9.500" r="1.300"/></svg></div>
     <div class="text-right pr-[9px]">8.1K</div>
     <div class="text-right pr-[9.500px]">3</div>
     <div class="flex items-center justify-end gap-[3px] pr-[10px]"><svg class="w-[7px] h-[8px]" viewBox="0 0 8 9" fill="none" stroke="#6fae2d" stroke-width="1.500"><path d="M4 9V1M1 4l3-3 3 3"/></svg>12</div>
    </div>
    <div class="h-[42px] pt-[1px] bg-[#f9f9f9] flex items-center pl-[12.600px] pr-[13px] text-[8px] text-[#999]">
     <span>1–10 of 376</span><span class="mx-[4px]">|</span><span>Rows:</span>
     <div class="ml-[6px] w-[31px] h-[19px] bg-white border border-[#ddd] rounded-[3px] flex items-center justify-center gap-[3px] font-semibold text-[#666]">10 <svg class="w-[6px] h-[4px]" viewBox="0 0 6 4" fill="none" stroke="#0b8a9e" stroke-width="1.200"><path d="m.5.5 2.500 2.500 2.500-2.500"/></svg></div>
     <div class="ml-auto w-[18.500px] h-[19px] border border-[#ddd] rounded-[3px] flex items-center justify-center"><svg class="w-[4px] h-[6px]" viewBox="0 0 4 6" fill="none" stroke="#b5dde3" stroke-width="1.200"><path d="M3.500.5 1 3l2.500 2.500"/></svg></div>
     <div class="ml-[5.500px] w-[19px] h-[19px] bg-white border border-[#ccc] flex items-center justify-center text-[#666]">1</div>
     <span class="ml-[5.500px]">of 50</span>
     <div class="ml-[6px] w-[18.500px] h-[19px] bg-white border border-[#ddd] rounded-[3px] flex items-center justify-center"><svg class="w-[4px] h-[6px]" viewBox="0 0 4 6" fill="none" stroke="#0b8a9e" stroke-width="1.300"><path d="M.5.5 3 3 .5 5.500"/></svg></div>
    </div>
    <a class="ml-[9px] mt-[9.600px] w-[84px] h-[18.500px] rounded-[3px] bg-[#00889e] flex items-center justify-center text-[8px] font-bold text-white">See the full report</a>
   </section>

   <!-- Table card 3 -->
   <section class="h-[330px] mt-[18.500px] bg-white shadow-[0_1px_2px_rgba(0,0,0,0.08)]">
    <div class="h-[53.700px] flex justify-between pl-[19px] pr-[18.600px] pt-[15px]">
     <h3 class="text-[12px] leading-[18px] font-semibold text-[#111]">Keywords where we remained in striking distance (on page 2)</h3>
     <div class="text-right text-[7px] leading-[9.300px] text-[#aaa] -mt-[0.500px]">Month of Jan 2025<br>change vs Dec 2024</div>
    </div>
    <div class="grid grid-cols-[28px_272.500px_107.500px_98.500px_99.500px] h-[46.300px] bg-[#f9f9f9] border-t-2 border-b-2 border-[#eceeee] text-[8px] leading-[11px] font-semibold text-[#666]">
     <div class="border-r border-[#e6e7e8]"></div>
     <div class="border-r border-[#e6e7e8] pl-[6px] pt-[5px]">Keyword</div>
     <div class="border-r border-[#e6e7e8] pr-[6.500px] pt-[5px] text-right">Monthly Search Volume</div>
     <div class="border-r border-[#e6e7e8] pr-[6.500px] pt-[5px] text-right">Rank<div class="text-[7px] font-normal text-[#999] leading-[9px] mt-[1px]">Jan 2025</div></div>
     <div class="pr-[7px] pt-[5px] text-right">Change in Rank</div>
    </div>
    <div class="grid grid-cols-[28px_272.500px_107.500px_98.500px_99.500px] items-center h-[30.340px] pt-[4px] border-b-2 border-[#dfe1e2] text-[7.900px] text-[#888]">
     <svg class="w-[6px] h-[4px] ml-[15px]" viewBox="0 0 6 4" fill="none" stroke="#0b8a9e" stroke-width="1.200"><path d="m.5.5 2.500 2.500 2.500-2.500"/></svg>
     <div class="flex items-center justify-between pl-[9px] pr-[12.500px]"><a class="text-[#1f8fa0] border-b border-[#b5dde3] leading-[10px]">weekly meal planning service</a><svg class="w-[3px] h-[11px]" viewBox="0 0 3 11" fill="#0b7c8f"><circle cx="1.500" cy="1.500" r="1.300"/><circle cx="1.500" cy="5.500" r="1.300"/><circle cx="1.500" cy="9.500" r="1.300"/></svg></div>
     <div class="text-right pr-[9px]">27.1K</div>
     <div class="text-right pr-[9.500px]">20</div>
     <div class="flex items-center justify-end gap-[3px] pr-[10px]"><svg class="w-[7px] h-[8px]" viewBox="0 0 8 9" fill="none" stroke="#6fae2d" stroke-width="1.500"><path d="M4 9V1M1 4l3-3 3 3"/></svg>9</div>
    </div>
    <div class="grid grid-cols-[28px_272.500px_107.500px_98.500px_99.500px] items-center h-[30.340px] pt-[4px] border-b-2 border-[#dfe1e2] text-[7.900px] text-[#888]">
     <svg class="w-[6px] h-[4px] ml-[15px]" viewBox="0 0 6 4" fill="none" stroke="#0b8a9e" stroke-width="1.200"><path d="m.5.5 2.500 2.500 2.500-2.500"/></svg>
     <div class="flex items-center justify-between pl-[9px] pr-[12.500px]"><a class="text-[#1f8fa0] border-b border-[#b5dde3] leading-[10px]">meal kit delivery San Francisco</a><svg class="w-[3px] h-[11px]" viewBox="0 0 3 11" fill="#0b7c8f"><circle cx="1.500" cy="1.500" r="1.300"/><circle cx="1.500" cy="5.500" r="1.300"/><circle cx="1.500" cy="9.500" r="1.300"/></svg></div>
     <div class="text-right pr-[9px]">18.1K</div>
     <div class="text-right pr-[9.500px]">11</div>
     <div class="flex items-center justify-end gap-[3px] pr-[10px]"><svg class="w-[7px] h-[8px]" viewBox="0 0 8 9" fill="none" stroke="#6fae2d" stroke-width="1.500"><path d="M4 9V1M1 4l3-3 3 3"/></svg>6</div>
    </div>
    <div class="grid grid-cols-[28px_272.500px_107.500px_98.500px_99.500px] items-center h-[30.340px] pt-[4px] border-b-2 border-[#dfe1e2] text-[7.900px] text-[#888]">
     <svg class="w-[6px] h-[4px] ml-[15px]" viewBox="0 0 6 4" fill="none" stroke="#0b8a9e" stroke-width="1.200"><path d="m.5.5 2.500 2.500 2.500-2.500"/></svg>
     <div class="flex items-center justify-between pl-[9px] pr-[12.500px]"><a class="text-[#1f8fa0] border-b border-[#b5dde3] leading-[10px]">fresh meal delivery Bay Area</a><svg class="w-[3px] h-[11px]" viewBox="0 0 3 11" fill="#0b7c8f"><circle cx="1.500" cy="1.500" r="1.300"/><circle cx="1.500" cy="5.500" r="1.300"/><circle cx="1.500" cy="9.500" r="1.300"/></svg></div>
     <div class="text-right pr-[9px]">12.1K</div>
     <div class="text-right pr-[9.500px]">13</div>
     <div class="flex items-center justify-end gap-[3px] pr-[10px]"><svg class="w-[7px] h-[8px]" viewBox="0 0 8 9" fill="none" stroke="#6fae2d" stroke-width="1.500"><path d="M4 9V1M1 4l3-3 3 3"/></svg>10</div>
    </div>
    <div class="grid grid-cols-[28px_272.500px_107.500px_98.500px_99.500px] items-center h-[30.340px] pt-[4px] border-b-2 border-[#dfe1e2] text-[7.900px] text-[#888]">
     <svg class="w-[6px] h-[4px] ml-[15px]" viewBox="0 0 6 4" fill="none" stroke="#0b8a9e" stroke-width="1.200"><path d="m.5.5 2.500 2.500 2.500-2.500"/></svg>
     <div class="flex items-center justify-between pl-[9px] pr-[12.500px]"><a class="text-[#1f8fa0] border-b border-[#b5dde3] leading-[10px]">meal subscription gift cards</a><svg class="w-[3px] h-[11px]" viewBox="0 0 3 11" fill="#0b7c8f"><circle cx="1.500" cy="1.500" r="1.300"/><circle cx="1.500" cy="5.500" r="1.300"/><circle cx="1.500" cy="9.500" r="1.300"/></svg></div>
     <div class="text-right pr-[9px]">12.1K</div>
     <div class="text-right pr-[9.500px]">14</div>
     <div class="flex items-center justify-end gap-[3px] pr-[10px]"><svg class="w-[7px] h-[8px]" viewBox="0 0 8 9" fill="none" stroke="#6fae2d" stroke-width="1.500"><path d="M4 9V1M1 4l3-3 3 3"/></svg>20</div>
    </div>
    <div class="grid grid-cols-[28px_272.500px_107.500px_98.500px_99.500px] items-center h-[30.340px] pt-[4px] border-b-2 border-[#cfd2d3] text-[7.900px] text-[#888]">
     <svg class="w-[6px] h-[4px] ml-[15px]" viewBox="0 0 6 4" fill="none" stroke="#0b8a9e" stroke-width="1.200"><path d="m.5.5 2.500 2.500 2.500-2.500"/></svg>
     <div class="flex items-center justify-between pl-[9px] pr-[12.500px]"><a class="text-[#1f8fa0] border-b border-[#b5dde3] leading-[10px]">custom meal plan builder</a><svg class="w-[3px] h-[11px]" viewBox="0 0 3 11" fill="#0b7c8f"><circle cx="1.500" cy="1.500" r="1.300"/><circle cx="1.500" cy="5.500" r="1.300"/><circle cx="1.500" cy="9.500" r="1.300"/></svg></div>
     <div class="text-right pr-[9px]">8.1K</div>
     <div class="text-right pr-[9.500px]">18</div>
     <div class="flex items-center justify-end gap-[3px] pr-[10px]"><svg class="w-[7px] h-[8px]" viewBox="0 0 8 9" fill="none" stroke="#6fae2d" stroke-width="1.500"><path d="M4 9V1M1 4l3-3 3 3"/></svg>12</div>
    </div>
    <div class="h-[42px] pt-[1px] bg-[#f9f9f9] flex items-center pl-[12.600px] pr-[13px] text-[8px] text-[#999]">
     <span>1–10 of 376</span><span class="mx-[4px]">|</span><span>Rows:</span>
     <div class="ml-[6px] w-[31px] h-[19px] bg-white border border-[#ddd] rounded-[3px] flex items-center justify-center gap-[3px] font-semibold text-[#666]">10 <svg class="w-[6px] h-[4px]" viewBox="0 0 6 4" fill="none" stroke="#0b8a9e" stroke-width="1.200"><path d="m.5.5 2.500 2.500 2.500-2.500"/></svg></div>
     <div class="ml-auto w-[18.500px] h-[19px] border border-[#ddd] rounded-[3px] flex items-center justify-center"><svg class="w-[4px] h-[6px]" viewBox="0 0 4 6" fill="none" stroke="#b5dde3" stroke-width="1.200"><path d="M3.500.5 1 3l2.500 2.500"/></svg></div>
     <div class="ml-[5.500px] w-[19px] h-[19px] bg-white border border-[#ccc] flex items-center justify-center text-[#666]">1</div>
     <span class="ml-[5.500px]">of 50</span>
     <div class="ml-[6px] w-[18.500px] h-[19px] bg-white border border-[#ddd] rounded-[3px] flex items-center justify-center"><svg class="w-[4px] h-[6px]" viewBox="0 0 4 6" fill="none" stroke="#0b8a9e" stroke-width="1.300"><path d="M.5.5 3 3 .5 5.500"/></svg></div>
    </div>
    <a class="ml-[9px] mt-[9.600px] w-[84px] h-[18.500px] rounded-[3px] bg-[#00889e] flex items-center justify-center text-[8px] font-bold text-white">See the full report</a>
   </section>
  </main>
 </div>
</div>
</div>
</body></html>
